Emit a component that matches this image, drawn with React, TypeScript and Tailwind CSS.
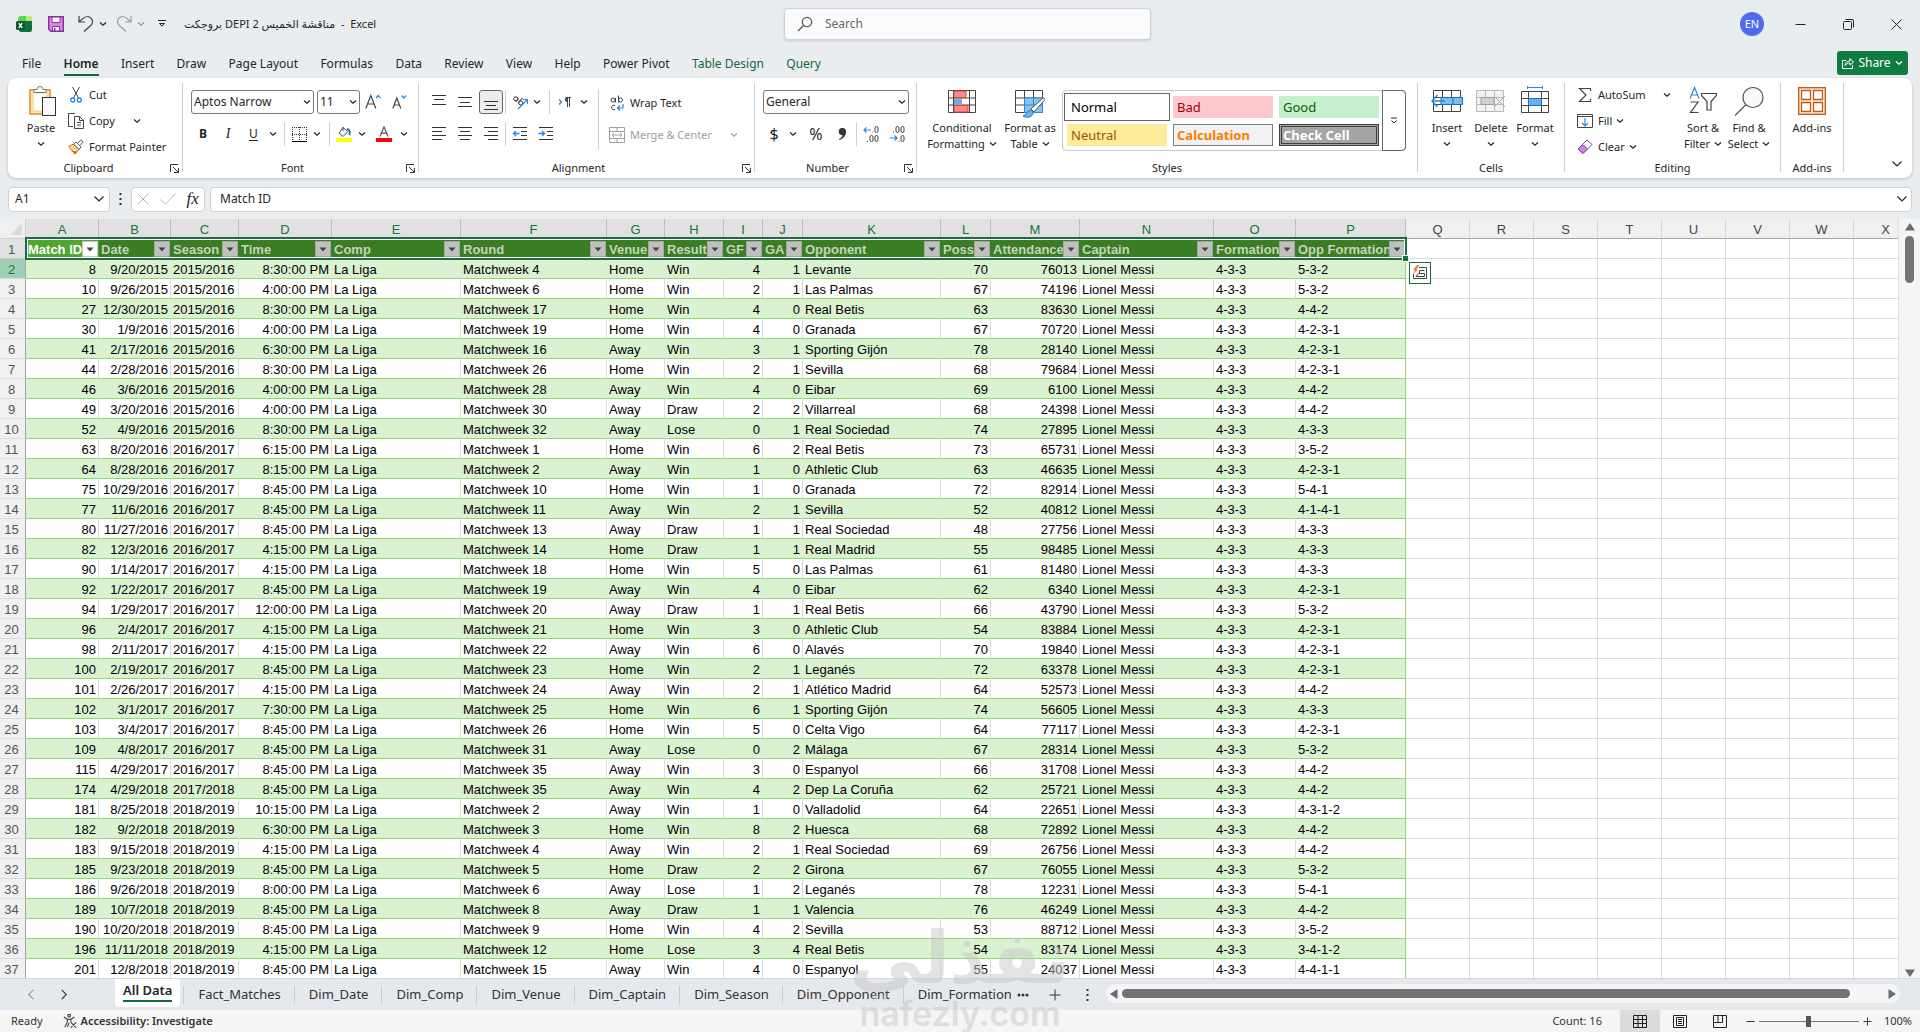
import type { ReactNode } from "react";
import clsx from "clsx";

const UI_FONT = "font-['Noto_Sans','DejaVu_Sans',sans-serif]";

const columns = [
  { id: "A", width: 73, title: "Match ID", right: true },
  { id: "B", width: 72, title: "Date", right: true },
  { id: "C", width: 68, title: "Season" },
  { id: "D", width: 93, title: "Time", right: true },
  { id: "E", width: 129, title: "Comp" },
  { id: "F", width: 146, title: "Round" },
  { id: "G", width: 58, title: "Venue" },
  { id: "H", width: 59, title: "Result" },
  { id: "I", width: 39, title: "GF", right: true },
  { id: "J", width: 40, title: "GA", right: true },
  { id: "K", width: 138, title: "Opponent" },
  { id: "L", width: 50, title: "Poss", right: true },
  { id: "M", width: 89, title: "Attendance", right: true },
  { id: "N", width: 134, title: "Captain" },
  { id: "O", width: 82, title: "Formation" },
  { id: "P", width: 110, title: "Opp Formation" },
];

const emptyColumns = ["Q", "R", "S", "T", "U", "V", "W", "X"];

// id, date, season, time, matchweek, venue, result, gf, ga, opponent, poss, attendance, opponent formation
const matches = `8|9/20/2015|2015/2016|8:30:00 PM|4|Home|Win|4|1|Levante|70|76013|5-3-2
10|9/26/2015|2015/2016|4:00:00 PM|6|Home|Win|2|1|Las Palmas|67|74196|5-3-2
27|12/30/2015|2015/2016|8:30:00 PM|17|Home|Win|4|0|Real Betis|63|83630|4-4-2
30|1/9/2016|2015/2016|4:00:00 PM|19|Home|Win|4|0|Granada|67|70720|4-2-3-1
41|2/17/2016|2015/2016|6:30:00 PM|16|Away|Win|3|1|Sporting Gijón|78|28140|4-2-3-1
44|2/28/2016|2015/2016|8:30:00 PM|26|Home|Win|2|1|Sevilla|68|79684|4-2-3-1
46|3/6/2016|2015/2016|4:00:00 PM|28|Away|Win|4|0|Eibar|69|6100|4-4-2
49|3/20/2016|2015/2016|4:00:00 PM|30|Away|Draw|2|2|Villarreal|68|24398|4-4-2
52|4/9/2016|2015/2016|8:30:00 PM|32|Away|Lose|0|1|Real Sociedad|74|27895|4-3-3
63|8/20/2016|2016/2017|6:15:00 PM|1|Home|Win|6|2|Real Betis|73|65731|3-5-2
64|8/28/2016|2016/2017|8:15:00 PM|2|Away|Win|1|0|Athletic Club|63|46635|4-2-3-1
75|10/29/2016|2016/2017|8:45:00 PM|10|Home|Win|1|0|Granada|72|82914|5-4-1
77|11/6/2016|2016/2017|8:45:00 PM|11|Away|Win|2|1|Sevilla|52|40812|4-1-4-1
80|11/27/2016|2016/2017|8:45:00 PM|13|Away|Draw|1|1|Real Sociedad|48|27756|4-3-3
82|12/3/2016|2016/2017|4:15:00 PM|14|Home|Draw|1|1|Real Madrid|55|98485|4-3-3
90|1/14/2017|2016/2017|4:15:00 PM|18|Home|Win|5|0|Las Palmas|61|81480|4-3-3
92|1/22/2017|2016/2017|8:45:00 PM|19|Away|Win|4|0|Eibar|62|6340|4-2-3-1
94|1/29/2017|2016/2017|12:00:00 PM|20|Away|Draw|1|1|Real Betis|66|43790|5-3-2
96|2/4/2017|2016/2017|4:15:00 PM|21|Home|Win|3|0|Athletic Club|54|83884|4-2-3-1
98|2/11/2017|2016/2017|4:15:00 PM|22|Away|Win|6|0|Alavés|70|19840|4-2-3-1
100|2/19/2017|2016/2017|8:45:00 PM|23|Home|Win|2|1|Leganés|72|63378|4-2-3-1
101|2/26/2017|2016/2017|4:15:00 PM|24|Away|Win|2|1|Atlético Madrid|64|52573|4-4-2
102|3/1/2017|2016/2017|7:30:00 PM|25|Home|Win|6|1|Sporting Gijón|74|56605|4-3-3
103|3/4/2017|2016/2017|8:45:00 PM|26|Home|Win|5|0|Celta Vigo|64|77117|4-2-3-1
109|4/8/2017|2016/2017|8:45:00 PM|31|Away|Lose|0|2|Málaga|67|28314|5-3-2
115|4/29/2017|2016/2017|8:45:00 PM|35|Away|Win|3|0|Espanyol|66|31708|4-4-2
174|4/29/2018|2017/2018|8:45:00 PM|35|Away|Win|4|2|Dep La Coruña|62|25721|4-4-2
181|8/25/2018|2018/2019|10:15:00 PM|2|Away|Win|1|0|Valladolid|64|22651|4-3-1-2
182|9/2/2018|2018/2019|6:30:00 PM|3|Home|Win|8|2|Huesca|68|72892|4-4-2
183|9/15/2018|2018/2019|4:15:00 PM|4|Away|Win|2|1|Real Sociedad|69|26756|4-4-2
185|9/23/2018|2018/2019|8:45:00 PM|5|Home|Draw|2|2|Girona|67|76055|5-3-2
186|9/26/2018|2018/2019|8:00:00 PM|6|Away|Lose|1|2|Leganés|78|12231|5-4-1
189|10/7/2018|2018/2019|8:45:00 PM|8|Away|Draw|1|1|Valencia|76|46249|4-4-2
190|10/20/2018|2018/2019|8:45:00 PM|9|Home|Win|4|2|Sevilla|53|88712|3-5-2
196|11/11/2018|2018/2019|4:15:00 PM|12|Home|Lose|3|4|Real Betis|54|83174|3-4-1-2
201|12/8/2018|2018/2019|8:45:00 PM|15|Away|Win|4|0|Espanyol|55|24037|4-4-1-1`
  .split("\n")
  .map((line) => {
    const [id, date, season, time, week, venue, result, gf, ga, opponent, poss, attendance, oppFormation] = line.split("|");
    return [id, date, season, time, "La Liga", `Matchweek ${week}`, venue, result, gf, ga, opponent, poss, attendance, "Lionel Messi", "4-3-3", oppFormation];
  });

const ribbonTabs = ["File", "Home", "Insert", "Draw", "Page Layout", "Formulas", "Data", "Review", "View", "Help", "Power Pivot", "Table Design", "Query"];
const sheetTabs = ["Fact_Matches", "Dim_Date", "Dim_Comp", "Dim_Venue", "Dim_Captain", "Dim_Season", "Dim_Opponent", "Dim_Formation"];

function Chevron({ className = "" }: { className?: string }) {
  return (
    <svg viewBox="0 0 8 8" className={clsx("inline-block h-2 w-2 shrink-0", className)} fill="none" stroke="currentColor" strokeWidth="1.2" aria-hidden="true">
      <path d="M1 2.500 4 5.300 7 2.500" />
    </svg>
  );
}

function WideChevron() {
  return (
    <svg viewBox="0 0 12 8" className="h-2 w-3 shrink-0" fill="none" stroke="currentColor" strokeWidth="1.2" aria-hidden="true">
      <path d="M1.5 1.5 6 6 10.5 1.5" />
    </svg>
  );
}

function IconButton({ label, className = "", children }: { label: string; className?: string; children: ReactNode }) {
  return (
    <button type="button" aria-label={label} className={clsx("flex h-6 shrink-0 items-center justify-center", className)}>
      {children}
    </button>
  );
}

function Separator({ className = "mx-1 h-6" }: { className?: string }) {
  return <div className={clsx("w-px shrink-0 bg-[#d0d0d0]", className)} />;
}

function Group({ title, launcher, className = "", children }: { title: string; launcher?: boolean; className?: string; children: ReactNode }) {
  return (
    <section aria-label={title} className={clsx("relative flex shrink-0 flex-col pb-0.5", className)}>
      <div className="flex h-[82px] items-start">{children}</div>
      <div className="flex h-4 items-center pr-px">
        <span className="flex-1 text-center">{title}</span>
        {launcher && (
          <button type="button" aria-label={`${title} settings`} className="flex w-4 justify-center">
            <svg viewBox="0 0 9 9" className="h-[9px] w-[9px]" fill="none" stroke="#333" aria-hidden="true">
              <path d="M.5 8V.5H8M3 3l5 5M8.5 4v4.5H4" />
            </svg>
          </button>
        )}
      </div>
      <div className="absolute top-[5px] right-0 h-[89px] w-px bg-[#d0d0d0]" />
    </section>
  );
}

function BigButton({ icon, lines, className = "" }: { icon: ReactNode; lines: string[]; className?: string }) {
  return (
    <button type="button" className={clsx("flex flex-col items-center pt-2 leading-4 whitespace-nowrap", className)}>
      <span className="flex h-[34px] items-start justify-center">{icon}</span>
      <span>{lines[0]}</span>
      {lines.length > 1 && (
        <span className="flex h-4 items-center gap-1">
          {lines[1]}
          <Chevron />
        </span>
      )}
    </button>
  );
}

function SmallButton({ icon, label, chevron, className = "" }: { icon: ReactNode; label: string; chevron?: "near" | "far"; className?: string }) {
  return (
    <button type="button" className={clsx("flex h-[26px] items-center gap-1 whitespace-nowrap", className)}>
      <span className="flex w-[18px] justify-center">{icon}</span>
      <span>{label}</span>
      {chevron && <Chevron className={chevron === "far" ? "ml-auto" : ""} />}
    </button>
  );
}

function Combo({ label, value, className = "" }: { label: string; value: string; className?: string }) {
  return (
    <div className={clsx("relative h-6 shrink-0", className)}>
      <select aria-label={label} defaultValue={value} className="h-full w-full appearance-none rounded-[3px] border border-[#7a7a7a] bg-white px-[2px] text-xs">
        <option>{value}</option>
      </select>
      <Chevron className="pointer-events-none absolute top-2 right-[3px]" />
    </div>
  );
}

function Lines({ rows }: { rows: [number, number, number][] }) {
  return (
    <svg viewBox="0 0 16 16" className="h-4 w-4" stroke="#333" shapeRendering="crispEdges" aria-hidden="true">
      {rows.map(([y, x1, x2]) => (
        <path key={y} d={`M${x1} ${y + 0.5}H${x2}`} />
      ))}
    </svg>
  );
}

function TitleBar() {
  return (
    <header className="grid h-12 grid-cols-[784fr_367fr_769fr] items-center">
      <div className="flex items-center pl-4 text-[11px]">
        <svg viewBox="0 0 16 16" className="mr-4 h-4 w-4" aria-hidden="true">
          <path d="M5 0h5v6H2V3a3 3 0 0 1 3-3Z" fill="#5fd05a" />
          <path d="M10 0h4a2 2 0 0 1 2 2v4h-6Z" fill="#b9ee72" />
          <path d="M3 5h13v9a2 2 0 0 1-2 2H5a2 2 0 0 1-2-2Z" fill="#12703a" />
          <rect y="5" width="9" height="9" rx="1.5" fill="#0c5a2d" />
          <path d="M2.8 7.2 6.2 11.8M6.2 7.2 2.8 11.8" stroke="#fff" strokeWidth="1.4" />
        </svg>
        <button type="button" aria-label="Save" className="mr-[14px]">
          <svg viewBox="0 0 16 16" className="h-4 w-4" aria-hidden="true">
            <path d="M.7.7h14.6v14.6H2.8L.7 13.2Z" fill="#d68be0" stroke="#8a2d9c" strokeWidth="1.4" />
            <path d="M4 1h8v5.5H4Z" fill="#fff" stroke="#8a2d9c" />
            <path d="M4.5 15v-4.5h7V15Z" fill="#fff" stroke="#8a2d9c" />
            <path d="M6 12h1.5v3H6Z" fill="#8a2d9c" />
          </svg>
        </button>
        <button type="button" aria-label="Undo" className="flex items-center gap-1">
          <svg viewBox="0 0 16 16" className="h-4 w-4" fill="none" stroke="#444" strokeWidth="1.2" aria-hidden="true">
            <path d="M1 0v6h6M1 6l4-3.6C7.6.2 11 .2 13 2.200s2 5 0 7L6 15.500" />
          </svg>
          <Chevron className="mx-px" />
        </button>
        <button type="button" aria-label="Redo" className="ml-2 flex items-center gap-1 text-[#9a9a9a]">
          <svg viewBox="0 0 16 16" className="h-4 w-4" fill="none" stroke="currentColor" strokeWidth="1.2" aria-hidden="true">
            <path d="M15 0v6H9M15 6l-4-3.6C8.4.2 5 .2 3 2.200s-2 5 0 7L10 15.500" />
          </svg>
          <Chevron className="mx-px" />
        </button>
        <button type="button" aria-label="Customize Quick Access Toolbar" className="ml-3 w-3">
          <svg viewBox="0 0 8 8" className="h-2 w-2" fill="none" stroke="currentColor" aria-hidden="true">
            <path d="M0 .5h8M1.5 3.500 4 6.200 6.5 3.500Z" />
          </svg>
        </button>
        <h1 className="ml-[14px] flex whitespace-pre">
          <span dir="rtl">مناقشة الخميس 2 DEPI بروجكت</span>
          <span>{"  -  Excel"}</span>
        </h1>
      </div>
      <label className="flex h-8 items-center gap-3 rounded-[4px] border border-[#cfd1d4] bg-[#fbfbfb] pl-3 shadow-sm">
        <svg viewBox="0 0 16 16" className="h-4 w-4" fill="none" stroke="#555" strokeWidth="1.2" aria-hidden="true">
          <circle cx="10" cy="6" r="4.7" />
          <path d="M6.5 9.500 1 15" />
        </svg>
        <input type="text" aria-label="Search" placeholder="Search" className="flex-1 bg-transparent text-xs outline-none placeholder:text-[#666]" />
      </label>
      <div className="flex justify-end">
        <button type="button" aria-label="Account" className="flex h-12 w-12 items-center justify-center">
          <span className="flex h-6 w-6 items-center justify-center rounded-full bg-[#4f6bed] text-[11px] text-white">EN</span>
        </button>
        <button type="button" aria-label="Minimize" className="flex h-12 w-12 items-center justify-center">
          <svg viewBox="0 0 11 11" className="h-[11px] w-[11px]" stroke="currentColor" aria-hidden="true">
            <path d="M.5 5.5h10" />
          </svg>
        </button>
        <button type="button" aria-label="Restore" className="flex h-12 w-12 items-center justify-center">
          <svg viewBox="0 0 11 11" className="h-[11px] w-[11px]" fill="none" stroke="currentColor" aria-hidden="true">
            <rect x=".5" y="2.5" width="8" height="8" rx="1" />
            <path d="M2.5.5H9A1.500 1.500 0 0 1 10.500 2v6.500" />
          </svg>
        </button>
        <button type="button" aria-label="Close" className="flex h-12 w-12 items-center justify-center">
          <svg viewBox="0 0 11 11" className="h-[11px] w-[11px]" stroke="currentColor" aria-hidden="true">
            <path d="m.5.5 10 10M10.500.5l-10 10" />
          </svg>
        </button>
      </div>
    </header>
  );
}

function TabRow() {
  return (
    <div className="flex h-[30px] items-start justify-between pr-3 pl-[11px]">
      <nav aria-label="Ribbon tabs" className="flex w-[821px] justify-between pt-[5px] text-xs">
        {ribbonTabs.map((tab, i) => (
          <button
            key={tab}
            type="button"
            className={clsx("flex px-[11px] leading-[21px] whitespace-nowrap", i > 10 && "text-[#12693f]", tab === "Home" && "font-semibold")}
          >
            <span className={clsx(tab === "Home" && "border-b-2 border-[#12693f]")}>{tab}</span>
          </button>
        ))}
      </nav>
      <button type="button" className="mt-[3px] flex h-6 w-[71px] items-center justify-center gap-1 rounded-[3px] bg-[#107c41] text-xs text-white">
        <svg viewBox="0 0 12 12" className="h-3 w-3" fill="none" stroke="currentColor" aria-hidden="true">
          <path d="M4 3.500H.5v8h10V8M3 8.500C3.500 5.500 5 4 8 4V1.500L11.500 5 8 8V6C6 6 4.500 6.500 3 8.500Z" />
        </svg>
        Share
        <Chevron />
      </button>
    </div>
  );
}

function ClipboardGroup() {
  return (
    <Group title="Clipboard" launcher className="w-[175px] pl-[3px]">
      <BigButton
        className="ml-1 w-[52px]"
        lines={["Paste", ""]}
        icon={
          <svg viewBox="0 0 28 30" className="ml-1 h-[30px] w-7" aria-hidden="true">
            <rect x="1" y="4" width="20" height="24" fill="#fff" stroke="#e08a1e" strokeWidth="1.5" />
            <path d="M3.500 6.500h15v19h-15Z" fill="none" stroke="#fbdc9f" strokeWidth="2.5" />
            <path d="M5 6.500V3.500h3a3 3 0 0 1 6 0h3v3Z" fill="#fff" stroke="#777" />
            <rect x="13.5" y="11.5" width="13" height="18" fill="#fafafa" stroke="#333" />
          </svg>
        }
      />
      <div className="flex flex-col pt-1">
        <SmallButton
          label="Cut"
          icon={
            <svg viewBox="0 0 12 16" className="h-4 w-3" fill="none" aria-hidden="true">
              <path d="M2.500 0 8.500 11M9.500 0 3.500 11" stroke="#444" />
              <circle cx="2.7" cy="13" r="2" stroke="#2b88d8" strokeWidth="1.3" />
              <circle cx="9.3" cy="13" r="2" stroke="#2b88d8" strokeWidth="1.3" />
            </svg>
          }
        />
        <SmallButton
          label="Copy"
          chevron="far"
          className="w-[74px]"
          icon={
            <svg viewBox="0 0 16 16" className="h-4 w-4" fill="none" stroke="#444" aria-hidden="true">
              <path d="M7 .5H.5v13H5M6.500 3.500h5l4 4v8h-9ZM11.500 3.500v4h4M9 9.500h4M9 12h4" />
            </svg>
          }
        />
        <SmallButton
          label="Format Painter"
          icon={
            <svg viewBox="0 0 16 16" className="h-4 w-4" aria-hidden="true">
              <path d="M.7 7.500 5.500 5l5.500 5.500L7 15.200Z" fill="#fbd59b" stroke="#d9721a" />
              <path d="m3 11.500 6 1-2 2.700Z" fill="#d9721a" />
              <path d="m5.500 5 2.500-2 5 5-2 2.500ZM9.500 4.500 13 .8 15.300 3 11.700 6.700" fill="#fff" stroke="#555" />
            </svg>
          }
        />
      </div>
    </Group>
  );
}

function FontGroup() {
  return (
    <Group title="Font" launcher className="w-[236px]">
      <div className="flex flex-col gap-2 pt-3 pl-2">
        <div className="flex">
          <Combo label="Font" value="Aptos Narrow" className="mr-[3px] w-[123px]" />
          <Combo label="Font size" value="11" className="w-[43px]" />
          <IconButton label="Increase font size" className="w-[26px]">
            <svg viewBox="0 0 16 16" className="h-4 w-4" fill="none" strokeWidth="1.2" aria-hidden="true">
              <path d="m.8 14.500 5-13 5 13M2.500 10h6.600" stroke="#444" />
              <path d="m11 4 2.200-2.500L15.400 4" stroke="#2b88d8" />
            </svg>
          </IconButton>
          <IconButton label="Decrease font size" className="w-[26px]">
            <svg viewBox="0 0 16 16" className="h-4 w-4" fill="none" strokeWidth="1.2" aria-hidden="true">
              <path d="m1.800 14.500 4-10.500 4 10.500M3.200 11h5.200" stroke="#444" />
              <path d="m10.600 1.500 2.200 2.500L15 1.500" stroke="#2b88d8" />
            </svg>
          </IconButton>
        </div>
        <div className="flex items-center">
          <IconButton label="Bold" className="w-6 text-xs font-bold">B</IconButton>
          <IconButton label="Italic" className="w-[26px] font-['Liberation_Serif',serif] text-sm italic">I</IconButton>
          <IconButton label="Underline" className="w-[25px] text-xs underline underline-offset-2">U</IconButton>
          <IconButton label="Underline options" className="w-[14px]"><Chevron /></IconButton>
          <Separator />
          <IconButton label="Borders" className="w-5">
            <svg viewBox="0 0 15 15" className="h-[15px] w-[15px]" fill="none" stroke="#333" shapeRendering="crispEdges" aria-hidden="true">
              <path d="M.5 0v14M14.500 0v14M7.500 0v14M0 .5h15M0 7.500h15" strokeDasharray="1 1" />
              <path d="M0 14.500h15" stroke="#000" />
            </svg>
          </IconButton>
          <IconButton label="Border options" className="w-4"><Chevron /></IconButton>
          <Separator />
          <IconButton label="Fill color" className="w-5">
            <svg viewBox="0 0 16 16" className="h-4 w-4" fill="none" aria-hidden="true">
              <path d="M7 1.500 3 7l4 3.500 5-5Z" fill="#f4f4f4" stroke="#555" />
              <path d="M7 1v4" stroke="#555" />
              <path d="M11 3c3 0 3 3 2.500 6" stroke="#1e6fb8" strokeWidth="1.8" />
              <rect y="12" width="16" height="4" fill="#ff0" />
            </svg>
          </IconButton>
          <IconButton label="Fill color options" className="w-4"><Chevron /></IconButton>
          <IconButton label="Font color" className="w-7">
            <svg viewBox="0 0 16 16" className="h-4 w-4" fill="none" aria-hidden="true">
              <path d="M4 10.500 8 .8l4 9.700M5.300 7.200h5.400" stroke="#555" strokeWidth="1.2" />
              <rect y="12" width="16" height="4" fill="#f00" />
            </svg>
          </IconButton>
          <IconButton label="Font color options" className="w-3"><Chevron /></IconButton>
        </div>
      </div>
    </Group>
  );
}

function AlignmentGroup() {
  return (
    <Group title="Alignment" launcher className="w-[336px]">
      <div className="flex w-[179px] flex-col gap-2 pt-3 pl-[7px]">
        <div className="flex">
          <IconButton label="Top align" className="w-[26px]"><Lines rows={[[1, 1, 15], [5, 3, 13], [10, 1, 15]]} /></IconButton>
          <IconButton label="Middle align" className="w-[26px]"><Lines rows={[[3, 1, 15], [8, 3, 13], [12, 1, 15]]} /></IconButton>
          <IconButton label="Bottom align" className="mx-px w-6 items-end rounded-[3px] border border-[#666] bg-[#ececec]"><Lines rows={[[4, 1, 15], [8, 3, 13], [12, 1, 15]]} /></IconButton>
          <Separator className="mr-px ml-px h-6" />
          <IconButton label="Orientation" className="w-[26px]">
            <svg viewBox="0 0 16 16" className="h-4 w-4" fill="none" aria-hidden="true">
              <g transform="rotate(40 6 6)" stroke="#444">
                <circle cx="3.5" cy="6.5" r="2" />
                <path d="M5.500 4.500v4M8 1.500v7" />
                <circle cx="10" cy="6.5" r="2" />
              </g>
              <path d="M6 15 15 6M11 5.500h4.500V10" stroke="#2b88d8" strokeWidth="1.2" />
            </svg>
          </IconButton>
          <IconButton label="Orientation options" className="w-2"><Chevron /></IconButton>
          <Separator className="ml-2 h-6" />
          <IconButton label="Text direction" className="w-[30px]">
            <svg viewBox="0 0 14 12" className="h-3 w-[14px]" fill="none" aria-hidden="true">
              <path d="M1 3.500 3.500 6 1 8.500" stroke="#2b88d8" strokeWidth="1.3" />
              <path d="M9.500 1v10M11.500 1v10M8 1.500h5" stroke="#444" />
              <path d="M9.500 1a2.500 2.500 0 0 0 0 5Z" fill="#444" />
            </svg>
          </IconButton>
          <IconButton label="Text direction options" className="w-2"><Chevron /></IconButton>
        </div>
        <div className="flex">
          <IconButton label="Align left" className="w-[26px]"><Lines rows={[[1, 1, 15], [5, 1, 11], [9, 1, 15], [13, 1, 11]]} /></IconButton>
          <IconButton label="Center" className="w-[26px]"><Lines rows={[[1, 1, 15], [5, 3, 13], [9, 1, 15], [13, 3, 13]]} /></IconButton>
          <IconButton label="Align right" className="w-[26px]"><Lines rows={[[1, 1, 15], [5, 5, 15], [9, 1, 15], [13, 5, 15]]} /></IconButton>
          <Separator className="mr-px ml-px h-6" />
          <IconButton label="Decrease indent" className="w-[26px]">
            <svg viewBox="0 0 16 16" className="h-4 w-4" fill="none" stroke="#333" aria-hidden="true">
              <path d="M1 1.500h14M9 5.500h6M9 9.500h6M1 13.500h14" />
              <path d="M7.500 7.500h-6M4 5 1.500 7.500 4 10" stroke="#2b88d8" strokeWidth="1.3" />
            </svg>
          </IconButton>
          <IconButton label="Increase indent" className="w-[26px]">
            <svg viewBox="0 0 16 16" className="h-4 w-4" fill="none" stroke="#333" aria-hidden="true">
              <path d="M1 1.500h14M9 5.500h6M9 9.500h6M1 13.500h14" />
              <path d="M.5 7.500h6M4 5l2.500 2.500L4 10" stroke="#2b88d8" strokeWidth="1.3" />
            </svg>
          </IconButton>
        </div>
      </div>
      <Separator className="mt-[11px] h-[61px]" />
      <div className="flex flex-col gap-[6px] pt-3 pl-[9px]">
        <SmallButton
          label="Wrap Text"
          icon={
            <svg viewBox="0 0 14 16" className="h-4 w-[14px]" fill="none" stroke="#444" aria-hidden="true">
              <circle cx="3" cy="5" r="2" />
              <path d="M5.500 3v4.500M8.500 .5v7" />
              <circle cx="10.5" cy="5" r="2" />
              <path d="M5 10.500a2.300 2.300 0 1 0 0 4" />
              <path d="M13 9v4H7.500M10 10.500 7.500 13l2.500 2.500" stroke="#2b88d8" strokeWidth="1.2" />
            </svg>
          }
        />
        <SmallButton
          label="Merge & Center"
          chevron="far"
          className="w-[130px] text-[#a0a0a0]"
          icon={
            <svg viewBox="0 0 16 16" className="h-4 w-4" fill="none" stroke="currentColor" aria-hidden="true">
              <path d="M.5.5h15v15H.5ZM.5 4.500h15M.5 11.500h15M8 .5v4M8 11.500v4M3 8h10M5 6 3 8l2 2M11 6l2 2-2 2" />
            </svg>
          }
        />
      </div>
    </Group>
  );
}

function Zero({ x, y }: { x: number; y: number }) {
  return <rect x={x} y={y} width="3" height="6" rx="1.5" />;
}

function NumberGroup() {
  return (
    <Group title="Number" launcher className="w-[162px]">
      <div className="flex flex-col gap-2 pt-3 pl-2">
        <Combo label="Number format" value="General" className="w-[146px]" />
        <div className="flex items-center">
          <IconButton label="Currency" className="w-[22px] text-base">$</IconButton>
          <IconButton label="Currency options" className="w-4"><Chevron /></IconButton>
          <IconButton label="Percent" className="w-[30px] text-base">%</IconButton>
          <IconButton label="Comma style" className="w-[22px]">
            <svg viewBox="0 0 8 12" className="h-3 w-2" fill="#333" aria-hidden="true">
              <path d="M4 0a3.500 3.500 0 0 1 4 4c0 4-3 7-7 8v-1c2-1 3.500-2 3.500-4A3.500 3.500 0 0 1 4 0Z" />
            </svg>
          </IconButton>
          <Separator className="mx-[3px] h-6" />
          <IconButton label="Increase decimal" className="w-[22px]">
            <svg viewBox="0 0 16 16" className="h-4 w-4" fill="none" stroke="#444" aria-hidden="true">
              <Zero x={12} y={0.5} />
              <Zero x={7} y={9.5} />
              <Zero x={12} y={9.5} />
              <path d="M9.500 6h1M4 15.500h1" />
              <path d="M8 4H1M3.500 1.500 1 4l2.500 2.500" stroke="#2b88d8" strokeWidth="1.2" />
            </svg>
          </IconButton>
          <IconButton label="Decrease decimal" className="w-[30px]">
            <svg viewBox="0 0 16 16" className="h-4 w-4" fill="none" stroke="#444" aria-hidden="true">
              <Zero x={7} y={0.5} />
              <Zero x={12} y={0.5} />
              <Zero x={12} y={9.5} />
              <path d="M4 6h1M9.500 15.500h1" />
              <path d="M.5 12h7.500M5.500 9.500 8 12l-2.500 2.500" stroke="#2b88d8" strokeWidth="1.2" />
            </svg>
          </IconButton>
        </div>
      </div>
    </Group>
  );
}

const cellStyles = [
  { name: "Normal", className: "bg-white pl-1 text-black outline outline-[#666] outline-offset-2" },
  { name: "Bad", className: "bg-[#ffc7ce] pl-1 text-[#9c0006]" },
  { name: "Good", className: "bg-[#c6efce] pl-1 text-[#006100]" },
  { name: "Neutral", className: "bg-[#ffeb9c] pl-1 text-[#9c5700]" },
  { name: "Calculation", className: "border border-[#7f7f7f] bg-[#f2f2f2] pl-[3px] font-bold text-[#fa7d00]" },
  { name: "Check Cell", className: "border-[3px] border-double border-[#3f3f3f] bg-[#a5a5a5] pl-px font-bold text-white" },
];

function StylesGroup() {
  return (
    <Group title="Styles" className="w-[501px]">
      <BigButton
        className="ml-[6px] w-[78px]"
        lines={["Conditional", "Formatting"]}
        icon={
          <svg viewBox="0 0 28 23" className="mt-1 h-[23px] w-7" fill="none" aria-hidden="true">
            <path d="M.5.5h27v22H.5ZM.5 8h27M.5 15h27M5.500 0v23M21.500 0v23" fill="#fff" stroke="#444" />
            <path d="M6 1h12v6.500H6ZM6 15.500h14V22H6Z" fill="#ff8a8a" stroke="#e03c32" />
            <path d="M6 8.500h8v6H6Z" fill="#69b0ea" />
          </svg>
        }
      />
      <BigButton
        className="w-[58px]"
        lines={["Format as", "Table"]}
        icon={
          <svg viewBox="0 0 30 28" className="mt-1 h-7 w-[30px]" fill="none" aria-hidden="true">
            <path d="M.5.5h27v22H.5ZM.5 8h27M.5 15h27M9.500 0v23M18.500 0v23" fill="#fff" stroke="#444" />
            <path d="M9.500 8h18v14.500h-18Z" fill="#8cc4f0" />
            <path d="M9.500 8h18v14.500h-18ZM9.500 15h18M18.500 8v14.500" stroke="#2b88d8" />
            <path d="m16 19 12-11c2 0 2 1 1.500 2L19 22Z" fill="#fff" stroke="#555" />
            <path d="M8 26c3 0 3-5 7-5.500 3 0 4 3 2 5-2.500 2.500-6 2-9 .5Z" fill="#69b0ea" stroke="#2b78c0" />
          </svg>
        }
      />
      <div className="mt-3 ml-[3px] flex h-[61px] w-[344px] rounded-[4px] border border-[#c8c8c8]">
        <div className="grid flex-1 grid-cols-[100px_100px_100px] grid-rows-[22px_22px] content-start gap-[6px] pt-[5px] pl-1">
          {cellStyles.map((s) => (
            <button key={s.name} type="button" className={clsx("flex items-center text-[13px] leading-4", s.className)}>
              {s.name}
            </button>
          ))}
        </div>
        <button type="button" aria-label="More styles" className="-my-px -mr-px flex w-6 items-center justify-center rounded-r-[4px] border border-[#666]">
          <svg viewBox="0 0 8 8" className="h-2 w-2" fill="none" stroke="currentColor" aria-hidden="true">
            <path d="M1 1h6M1.500 3.500 4 6l2.500-2.500" />
          </svg>
        </button>
      </div>
    </Group>
  );
}

function CellsGroup() {
  return (
    <Group title="Cells" className="w-[147px]">
      <BigButton
        className="ml-[7px] w-11"
        lines={["Insert", ""]}
        icon={
          <svg viewBox="0 0 32 22" className="mt-1 h-[22px] w-8" fill="none" stroke="#444" aria-hidden="true">
            <path d="M2.500.5h27v21h-27ZM11.500 0v22M20.500 0v22M2.500 7.500h27M2.500 14.500h27" fill="#fff" />
            <path d="M10 7.500h21.500v7H10Z" fill="#7cbcf0" stroke="#1e6fb8" />
            <path d="M22 7.500v7" stroke="#1e6fb8" />
            <path d="M14 11H1M6.500 5 1 11l5.500 6" stroke="#2b88d8" strokeWidth="1.5" />
          </svg>
        }
      />
      <BigButton
        className="w-11"
        lines={["Delete", ""]}
        icon={
          <svg viewBox="0 0 30 22" className="mt-1 h-[22px] w-[30px]" fill="none" stroke="#b8b8b8" aria-hidden="true">
            <path d="M.5.5h27v21H.5ZM9.500 0v22M18.500 0v22M.5 7.500h27M.5 14.500h27" fill="#f2f2f2" />
            <path d="M5 7.500h13v7H5Z" fill="#d0d0d0" stroke="#a0a0a0" />
            <path d="m18 6 11 11M29 6 18 17" stroke="#a8a8a8" />
          </svg>
        }
      />
      <BigButton
        className="w-11"
        lines={["Format", ""]}
        icon={
          <svg viewBox="0 0 28 28" className="h-7 w-7" fill="none" stroke="#444" aria-hidden="true">
            <path d="M.5 5.500h27v21H.5ZM7.500 5v22M20.500 5v22M.5 12.500h27M.5 19.500h27" fill="#fff" />
            <path d="M7.500 12.500h13v7h-13Z" fill="#69b0ea" stroke="#1e6fb8" />
            <path d="M6.500 0v3M21.500 0v3M6.500 1.500h15" stroke="#2b88d8" />
          </svg>
        }
      />
    </Group>
  );
}

function EditingGroup() {
  return (
    <Group title="Editing" className="w-[216px]">
      <div className="flex w-[115px] flex-col pt-1 pl-[11px]">
        <SmallButton
          label="AutoSum"
          chevron="far"
          className="w-[95px]"
          icon={
            <svg viewBox="0 0 14 16" className="h-4 w-[14px]" fill="none" stroke="#444" strokeWidth="1.2" aria-hidden="true">
              <path d="M12.500 4V1.500h-11L8 8l-6.500 6.500h11V12" />
            </svg>
          }
        />
        <SmallButton
          label="Fill"
          chevron="near"
          icon={
            <svg viewBox="0 0 16 14" className="h-[14px] w-4" fill="none" stroke="#444" aria-hidden="true">
              <path d="M.5.5h15v13H.5ZM.5 2.500h15" />
              <path d="M8 4v8M5 9l3 3 3-3" stroke="#2b88d8" strokeWidth="1.2" />
            </svg>
          }
        />
        <SmallButton
          label="Clear"
          chevron="near"
          icon={
            <svg viewBox="0 0 16 16" className="h-4 w-4" fill="#fff" stroke="#8f3fa5" aria-hidden="true">
              <path d="m10 1 5 4.500-9 9L1 10Z" />
              <path d="m5.500 5.500 5 4.500L6 14.500 1 10Z" fill="#cf7fe0" />
            </svg>
          }
        />
      </div>
      <BigButton
        className="w-[46px]"
        lines={["Sort &", "Filter"]}
        icon={
          <svg viewBox="0 0 28 28" className="h-7 w-7" fill="none" strokeWidth="1.2" aria-hidden="true">
            <path d="m1 12.500 4.500-11 4.500 11M2.500 9h6" stroke="#2b88d8" />
            <path d="M1.500 16h7.500L1.500 26.500H9.500" stroke="#444" />
            <path d="M12.500 7.500h15v2l-5.500 6V24h-4v-8.500l-5.500-6Z" stroke="#444" />
          </svg>
        }
      />
      <BigButton
        className="w-[46px]"
        lines={["Find &", "Select"]}
        icon={
          <svg viewBox="0 0 30 30" className="h-[30px] w-[30px]" fill="none" stroke="#555" strokeWidth="1.2" aria-hidden="true">
            <circle cx="19" cy="11.5" r="10" fill="#fafafa" />
            <path d="M12 18.500 1 29.500" />
          </svg>
        }
      />
    </Group>
  );
}

function Ribbon() {
  return (
    <div className="mx-2 flex h-[100px] rounded-lg bg-white text-[11px] shadow-[0_1px_3px_rgba(0,0,0,0.2)]">
      <ClipboardGroup />
      <FontGroup />
      <AlignmentGroup />
      <NumberGroup />
      <StylesGroup />
      <CellsGroup />
      <EditingGroup />
      <Group title="Add-ins" className="w-[63px]">
        <BigButton
          className="w-[62px]"
          lines={["Add-ins"]}
          icon={
            <svg viewBox="0 0 28 28" className="mt-px h-7 w-7" fill="none" stroke="#c55a11" aria-hidden="true">
              <rect x=".7" y=".7" width="26.6" height="26.6" fill="#fff3e8" strokeWidth="1.4" />
              <path d="M3.500 3.500h9v9h-9ZM15.500 3.500h9v9h-9ZM3.500 15.500h9v9h-9ZM15.500 15.500h9v9h-9Z" fill="#fff" strokeWidth="1.3" />
            </svg>
          }
        />
      </Group>
      <div className="flex flex-1 items-end justify-end pr-[9px] pb-[10px]">
        <button type="button" aria-label="Collapse ribbon"><WideChevron /></button>
      </div>
    </div>
  );
}

function FormulaBar() {
  return (
    <div className="flex h-[41px] items-center px-2 pt-px text-xs">
      <div className="flex h-[25px] w-[102px] items-center rounded-[4px] border border-[#d0d0d0] bg-white pr-1">
        <input aria-label="Name box" defaultValue="A1" className="w-full min-w-0 bg-transparent pl-[6px] outline-none" />
        <button type="button" aria-label="Name box list"><WideChevron /></button>
      </div>
      <svg viewBox="0 0 3 12" className="mx-[9px] h-3 w-[3px]" fill="#333" aria-hidden="true">
        <path d="M.5 0h2v2h-2ZM.5 5h2v2h-2ZM.5 10h2v2h-2Z" />
      </svg>
      <div className="flex h-[25px] w-[74px] items-center justify-around rounded-[4px] border border-[#d0d0d0] bg-white">
        <button type="button" aria-label="Cancel">
          <svg viewBox="0 0 12 12" className="h-3 w-3" stroke="#b5b5b5" aria-hidden="true"><path d="m.5.5 11 11M11.500.5l-11 11" /></svg>
        </button>
        <button type="button" aria-label="Enter">
          <svg viewBox="0 0 16 12" className="h-3 w-4" fill="none" stroke="#b5b5b5" aria-hidden="true"><path d="m.5 6.500 5 4.500L15.500.5" /></svg>
        </button>
        <button type="button" aria-label="Insert function" className="font-['Liberation_Serif',serif] text-[17px] leading-5 text-[#222] italic">fx</button>
      </div>
      <div className="ml-[5px] flex h-[25px] flex-1 items-center rounded-[4px] border border-[#d0d0d0] bg-white pr-[3px]">
        <input aria-label="Formula bar" defaultValue="Match ID" className="flex-1 bg-transparent pl-[9px] outline-none" />
        <button type="button" aria-label="Expand formula bar"><WideChevron /></button>
      </div>
    </div>
  );
}

function HeaderCell({ title, active }: { title: string; active: boolean }) {
  return (
    <th className={clsx("h-5 p-0 text-left", active ? "bg-[#4ea72e] text-white" : "bg-[#3a7d22] text-[#c3d3bc]")}>
      <div className="flex h-5 items-center pr-px">
        <span className="min-w-0 flex-1 overflow-hidden pl-[2px] whitespace-nowrap">{title}</span>
        <button type="button" aria-label={`Filter ${title}`} className={clsx("flex h-4 w-4 shrink-0 items-center justify-center border", active ? "border-[#c8c8c8] bg-white" : "border-[#a5a5a5] bg-[#c0c0c0]")}>
          <svg viewBox="0 0 8 5" className="h-[5px] w-2" fill="#444" aria-hidden="true"><path d="M.5.5h7L4 4.500Z" /></svg>
        </button>
      </div>
    </th>
  );
}

function Grid() {
  return (
    <div className="relative min-w-0 flex-1 overflow-hidden bg-white">
      <table className="w-[1918px] table-fixed border-separate border-spacing-0 font-['Liberation_Sans',sans-serif] text-[13px] leading-[17px] text-black">
        <colgroup>
          <col className="w-[26px]" />
          {columns.map((c) => <col key={c.id} style={{ width: c.width }} />)}
          {emptyColumns.map((c) => <col key={c} className="w-16" />)}
        </colgroup>
        <thead>
          <tr className="bg-[#f0f0f0]">
            <td className="h-5 border-r border-b border-[#d0d0d0] p-0">
              <svg viewBox="0 0 12 12" className="mr-[3px] ml-auto block h-3 w-3" fill="#dcdcdc" aria-hidden="true"><path d="M12 0v12H0Z" /></svg>
            </td>
            {columns.map((c) => (
              <th key={c.id} scope="col" className="h-5 border-r border-b border-[#bdbdbd] bg-[#e1e1e1] p-0 pt-[2px] font-normal text-[#1d7044]">{c.id}</th>
            ))}
            {emptyColumns.map((c) => (
              <th key={c} scope="col" className="h-5 border-r border-b border-r-[#d6d6d6] border-b-[#a5a5a5] p-0 pt-[2px] font-normal text-[#444]">{c}</th>
            ))}
          </tr>
        </thead>
        <tbody>
          <tr>
            <th scope="row" className="h-5 border-r border-b border-[#c8c8c8] bg-[#e1e1e1] p-0 pt-[2px] pr-[2px] font-normal text-[#1d7044]">1</th>
            {columns.map((c, i) => <HeaderCell key={c.id} title={c.title} active={i === 0} />)}
            {emptyColumns.map((c) => <td key={c} className="h-5 border-r border-b border-[#dcdcdc] p-0" />)}
          </tr>
          {matches.map((row, r) => {
            const banded = r % 2 === 0;
            return (
              <tr key={row[0]}>
                <th
                  scope="row"
                  className={clsx(
                    "h-5 border-r border-b border-r-[#a5a5a5] border-b-[#dcdcdc] p-0 pt-[2px] pr-[2px] font-normal",
                    r === 0 ? "bg-[#9fd0b6] text-[#1d7044]" : "bg-[#f0f0f0] text-[#555]"
                  )}
                >
                  {r + 2}
                </th>
                {row.map((value, i) => (
                  <td
                    key={columns[i].id}
                    className={clsx(
                      "h-5 border-r border-b border-b-[#8ed973] px-[2px] pt-[2px] pb-0 whitespace-nowrap",
                      banded ? "bg-[#daf2d0]" : "bg-white",
                      i === 15 ? "border-r-[#8ed973]" : banded ? "border-r-[#daf2d0]" : "border-r-[#dcdcdc]",
                      columns[i].right && "text-right"
                    )}
                  >
                    {value}
                  </td>
                ))}
                {emptyColumns.map((c) => <td key={c} className="h-5 border-r border-b border-[#dcdcdc] p-0" />)}
              </tr>
            );
          })}
        </tbody>
      </table>

      {/* Selection outline with its fill handle */}
      <div className="pointer-events-none absolute top-[18px] left-[25px] h-[23px] w-[1382px] border-2 border-[#1b6e42]">
        <div className="h-full border border-white" />
        <div className="absolute -right-1 -bottom-1 h-[7px] w-[7px] border border-white bg-[#1b6e42]" />
      </div>
      <button type="button" aria-label="Quick analysis" className="absolute top-[43px] left-[1409px] flex h-[22px] w-[22px] items-center justify-center border border-[#1b6e42] bg-white">
        <svg viewBox="0 0 16 16" className="h-4 w-4" fill="none" stroke="#444" aria-hidden="true">
          <path d="M7 2.500h7.500v11H1.500V9M4 11.500h8.500v-3h-6l-2.500 3M7.500 8V5.500h5" />
          <path d="M5 0 1 5h2L1 9.500 6 4.500H4.200L7.500 0Z" fill="#ed7d31" stroke="none" />
        </svg>
      </button>
    </div>
  );
}

function VerticalScroll() {
  return (
    <div className="flex w-[22px] flex-col items-center border-l border-[#e0e0e0] bg-[#f5f5f5] pt-1 pb-px">
      <svg viewBox="0 0 10 8" className="h-2 w-[10px]" fill="#6b6b6b" aria-hidden="true"><path d="M5 0 10 7.500H0Z" /></svg>
      <div className="mt-[5px] h-[47px] w-[9px] rounded-full bg-[#737373]" />
      <svg viewBox="0 0 10 8" className="mt-auto h-2 w-[10px]" fill="#6b6b6b" aria-hidden="true"><path d="M0 .5h10L5 8Z" /></svg>
    </div>
  );
}

function SheetTabs() {
  return (
    <div className="flex h-8 shrink-0 border-t border-[#d5d8dc] bg-[#e5e8ed] text-[13px]">
      <div className="flex w-[115px] shrink-0 items-center pb-px pl-[27px]">
        <button type="button" aria-label="Previous sheet" className="w-[33px]">
          <svg viewBox="0 0 8 12" className="h-[11px] w-2" fill="none" stroke="#999" strokeWidth="1.2" aria-hidden="true"><path d="M6.500 1 1.500 6l5 5" /></svg>
        </button>
        <button type="button" aria-label="Next sheet">
          <svg viewBox="0 0 8 12" className="h-[11px] w-2" fill="none" stroke="#333" strokeWidth="1.2" aria-hidden="true"><path d="m1.500 1 5 5-5 5" /></svg>
        </button>
      </div>
      <nav aria-label="Sheets" className="flex w-[896px] shrink-0 overflow-hidden">
        <button type="button" className="mr-[3px] h-[28px] shrink-0 rounded-b-[4px] bg-white px-2 pb-1 font-semibold whitespace-nowrap">
          <span className="border-b-2 border-[#12693f] pb-px">All Data</span>
        </button>
        {sheetTabs.map((tab) => (
          <button key={tab} type="button" className="flex shrink-0 items-center whitespace-nowrap text-[#333]">
            <span className="h-[18px] w-px bg-[#c8ccd2]" />
            <span className="pr-[13px] pl-[14px]">{tab}</span>
          </button>
        ))}
      </nav>
      <button type="button" aria-label="More sheets" className="ml-[6px] shrink-0">
        <svg viewBox="0 0 12 4" className="h-1 w-3" fill="#333" aria-hidden="true"><circle cx="2" cy="2" r="1.5" /><circle cx="6" cy="2" r="1.5" /><circle cx="10" cy="2" r="1.5" /></svg>
      </button>
      <button type="button" aria-label="New sheet" className="ml-5 shrink-0">
        <svg viewBox="0 0 12 12" className="h-3 w-3" stroke="#333" aria-hidden="true"><path d="M6 .5v11M.5 6h11" /></svg>
      </button>
      <svg viewBox="0 0 3 12" className="mt-[10px] mr-[17px] ml-[25px] h-3 w-[3px] shrink-0" fill="#333" aria-hidden="true">
        <path d="M.5 0h2v2h-2ZM.5 5h2v2h-2ZM.5 10h2v2h-2Z" />
      </svg>
      <div className="mt-[5px] mr-5 flex h-[19px] min-w-0 flex-1 items-center rounded-full bg-[#f5f5f5] px-1">
        <svg viewBox="0 0 8 10" className="h-[10px] w-2 shrink-0" fill="#6b6b6b" aria-hidden="true"><path d="M7.500 0v10L0 5Z" /></svg>
        <div className="ml-1 h-[9px] flex-1 rounded-full bg-[#737373]" />
        <svg viewBox="0 0 8 10" className="ml-[38px] h-[10px] w-2 shrink-0" fill="#6b6b6b" aria-hidden="true"><path d="M.5 0v10L8 5Z" /></svg>
      </div>
    </div>
  );
}

function StatusBar() {
  return (
    <footer className="flex h-[22px] shrink-0 items-center bg-[#f5f5f5] text-[11px] text-[#333]">
      <span className="ml-[11px]">Ready</span>
      <button type="button" className="ml-5 flex items-center gap-1 font-semibold">
        <svg viewBox="0 0 16 16" className="h-[14px] w-[14px]" fill="none" stroke="currentColor" strokeWidth="1.2" aria-hidden="true">
          <circle cx="7" cy="2" r="1.5" />
          <path d="M1 3.500 5 6v3l-3 6M13 3.500 9 6v3M5 6h4M7 10l-2 5M9 9.500l6 6M15 9.500l-6 6" />
        </svg>
        Accessibility: Investigate
      </button>
      <span className="mr-[18px] ml-auto">Count: 16</span>
      <button type="button" aria-label="Normal view" className="flex h-full w-10 items-center justify-center bg-[#dcdcdc]">
        <svg viewBox="0 0 14 13" className="h-[13px] w-[14px]" fill="none" stroke="#222" aria-hidden="true"><path d="M.5.5h13v12H.5ZM5 .5v12M9.500.5v12M.5 4.500h13M.5 8.500h13" /></svg>
      </button>
      <button type="button" aria-label="Page layout view" className="flex h-full w-10 items-center justify-center">
        <svg viewBox="0 0 14 13" className="h-[13px] w-[14px]" fill="none" stroke="#222" aria-hidden="true"><path d="M.5.5h13v12H.5ZM3.500 2.500h7v8h-7ZM5 4.500h4M5 6.500h4M5 8.500h4" /></svg>
      </button>
      <button type="button" aria-label="Page break preview" className="flex h-full w-10 items-center justify-center">
        <svg viewBox="0 0 14 13" className="h-[13px] w-[14px]" fill="none" stroke="#222" aria-hidden="true"><path d="M.5.5h13v12H.5ZM5 .5v7M9.500.5v7M.5 7.500h9" /></svg>
      </button>
      <button type="button" aria-label="Zoom out" className="ml-[6px]">
        <svg viewBox="0 0 9 9" className="h-[9px] w-[9px]" stroke="#333" aria-hidden="true"><path d="M.5 4.500h8" /></svg>
      </button>
      <input
        type="range"
        aria-label="Zoom"
        min="0"
        max="100"
        defaultValue="50"
        className="mx-1 h-4 w-[100px] appearance-none bg-transparent [&::-webkit-slider-runnable-track]:h-px [&::-webkit-slider-runnable-track]:bg-[#777] [&::-webkit-slider-thumb]:-mt-[5px] [&::-webkit-slider-thumb]:h-[11px] [&::-webkit-slider-thumb]:w-[5px] [&::-webkit-slider-thumb]:appearance-none [&::-webkit-slider-thumb]:bg-[#555]"
      />
      <button type="button" aria-label="Zoom in">
        <svg viewBox="0 0 9 9" className="h-[9px] w-[9px]" stroke="#333" aria-hidden="true"><path d="M.5 4.500h8M4.500.5v8" /></svg>
      </button>
      <span className="mr-2 ml-3">100%</span>
    </footer>
  );
}

export default function App() {
  return (
    <div className={clsx("relative flex h-screen flex-col overflow-hidden bg-[#e9edf0] text-[#262626]", UI_FONT)}>
      <TitleBar />
      <TabRow />
      <Ribbon />
      <FormulaBar />
      <main className="flex min-h-0 flex-1">
        <Grid />
        <VerticalScroll />
      </main>
      <SheetTabs />
      <StatusBar />

      {/* Watermark */}
      <div className="pointer-events-none absolute bottom-0 left-1/2 flex w-[220px] -translate-x-1/2 flex-col items-center text-[#c8c8c8] opacity-50" aria-hidden="true">
        <span dir="rtl" className="font-['DejaVu_Sans',sans-serif] text-7xl leading-[76px] font-bold">نفذلي</span>
        <span className="font-['Inter',sans-serif] text-[34px] leading-9 font-semibold">nafezly.com</span>
      </div>
    </div>
  );
}
